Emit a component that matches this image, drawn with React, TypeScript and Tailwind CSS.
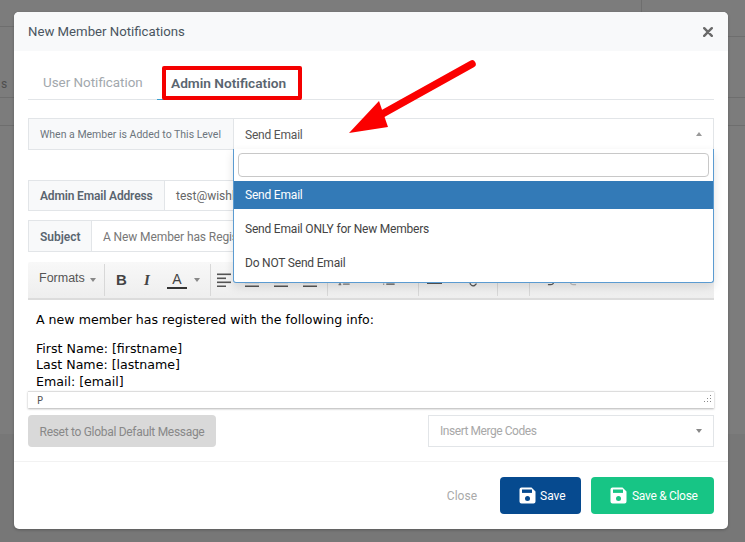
import React from "react";
import { List, ListOrdered, Link, Undo2, Redo2 } from "lucide-react";

const font = "font-['Roboto',sans-serif]";

function Floppy({ hole }: { hole: string }) {
  return (
    <svg width="17" height="17" viewBox="0 0 17 17" className="shrink-0">
      <path d="M2.5 0.5H12.5L16.5 4.5V14.5A2 2 0 0 1 14.5 16.5H2.5A2 2 0 0 1 0.5 14.5V2.5A2 2 0 0 1 2.5 0.5Z" fill="#fff" />
      <rect x="3" y="2.5" width="10" height="3.4" fill={hole} />
      <circle cx="8.5" cy="11.5" r="2.5" fill={hole} />
    </svg>
  );
}

function Caret({ up, cls }: { up?: boolean; cls?: string }) {
  return (
    <span
      className={
        (up
          ? "w-0 h-0 border-x-[3.5px] border-x-transparent border-b-[4px] border-b-[#999] "
          : "w-0 h-0 border-x-[3.5px] border-x-transparent border-t-[4px] border-t-[#888] ") + (cls ?? "")
      }
    />
  );
}

function Sep({ cls }: { cls: string }) {
  return <span className={"w-px h-[32px] bg-[#d8d8d8] shrink-0 " + cls} />;
}

function Lines({ w, cls }: { w: number[]; cls: string }) {
  return (
    <svg width="14" height="14" viewBox="0 0 14 14" className={"shrink-0 " + cls}>
      {w.map((x, i) => (
        <rect key={i} x={0} y={i * 4 + 0.5} width={x} height="1.6" fill="#555" />
      ))}
    </svg>
  );
}

export default function App() {
  return (
    <div className={`relative w-[745px] h-[542px] overflow-hidden bg-[#7c7c7c] ${font}`}>
      {/* dimmed page behind the modal */}
      <div className="flex flex-col h-full">
        <div className="flex h-[434px]">
          <div className="w-[372px] flex flex-col">
            <div className="h-[27px] border-b border-[#6e6e6e]" />
            <div className="h-[71px] border-b border-[#6e6e6e] flex items-end pb-[7px] pl-[1px] text-[12px] leading-none text-[#4e4e4e]">
              <span>s</span>
            </div>
            <div className="h-[28px] border-b border-[#6e6e6e]" />
          </div>
          <div className="flex-1 flex flex-col">
            <div className="h-[37px] border-b border-[#6e6e6e]">
              <div className="w-[270px] h-full border-r border-[#6e6e6e]" />
            </div>
            <div className="h-[61px] border-b border-[#6e6e6e]" />
            <div className="h-[28px] border-b border-[#6e6e6e]" />
          </div>
        </div>
        <div className="flex-1 bg-[#777777]" />
      </div>

      <div className="absolute left-[14px] top-[12px] w-[714px] h-[517px] bg-white rounded-[5px] flex flex-col shadow-[0_1px_3px_rgba(0,0,0,0.25)]">
        <div className="h-[39px] bg-[#f8f9fa] rounded-t-[5px] flex items-center justify-between px-[14px] text-[13.2px] text-[#4a5560]">
          <span>New Member Notifications</span>
          <svg width="10" height="10" viewBox="0 0 10 10" className="mr-[1px]">
            <path d="M1.2 1.2L8.8 8.8M8.8 1.2L1.2 8.8" stroke="#6a6a6a" strokeWidth="2.4" strokeLinecap="round" />
          </svg>
        </div>

        <div className="flex-1 px-[14px] flex flex-col">
          <div className="h-[49px] border-b border-[#e2e5e8] flex items-end">
            <div className="w-[129px] h-full flex items-center pl-[15px] pt-[17px] text-[13.4px] text-[#a2a8ad]">User Notification</div>
            <div className="h-[33px] mb-[-1px] w-[144px] border-b border-[#3aa0d0] flex items-center pl-[14px] text-[13.7px] font-semibold text-[#5a6570]">
              Admin Notification
            </div>
          </div>

          <div className="mt-[18px] h-[32px] flex border border-[#e2e5e8]">
            <div className="w-[205px] bg-[#f8f9fa] border-r border-[#e2e5e8] flex items-center pl-[11px] pt-[1px] text-[#6c757d] text-[10.5px]">
              When a Member is Added to This Level
            </div>
            <div className="flex-1 flex items-center justify-between px-[11px] text-[#555] text-[12px] tracking-[-0.2px]">
              <span className="pt-[1px]">Send Email</span>
              <Caret up />
            </div>
          </div>

          <div className="mt-[30px] h-[31px] flex border border-[#e2e5e8]">
            <div className="w-[136px] bg-[#f8f9fa] border-r border-[#e2e5e8] flex items-center pl-[11px] text-[12px] tracking-[-0.15px] font-semibold text-[#5a6570]">
              Admin Email Address
            </div>
            <div className="flex-1 flex items-center pl-[11px] text-[12px] text-[#666]">test@wishlistmember.com</div>
          </div>

          <div className="mt-[9px] h-[32px] flex border border-[#e2e5e8]">
            <div className="w-[63px] bg-[#f8f9fa] border-r border-[#e2e5e8] flex items-center pl-[11px] pt-[2px] text-[12px] font-semibold text-[#5a6570]">
              Subject
            </div>
            <div className="flex-1 flex items-center pl-[11px] pt-[2px] text-[12px] tracking-[-0.1px] text-[#777]">A New Member has Registered</div>
          </div>

          <div className="mt-[10px] h-[38px] bg-gradient-to-b from-[#f8f8f8] to-[#eeeeee] border-b-2 border-[#dcdcdc] rounded-t-[2px] flex items-center text-[#444] font-['Liberation_Sans',sans-serif]">
            <span className="ml-[11px] w-[46px] text-[12.5px] text-[#555] -mt-[4px]">Formats</span>
            <Caret cls="ml-[5px]" />
            <Sep cls="ml-[8px]" />
            <span className="ml-[11px] w-[10px] font-bold text-[15px]">B</span>
            <span className="ml-[18px] w-[9px] italic font-bold text-[15px] font-['Liberation_Serif',serif]">I</span>
            <span className="ml-[14px] w-[20px] text-[14px] border-b-2 border-[#333] leading-[15px] text-center">A</span>
            <Caret cls="ml-[7px]" />
            <Sep cls="ml-[10px]" />
            <Lines w={[14, 9, 14, 9]} cls="ml-[6px]" />
            <Lines w={[14, 14, 14, 14]} cls="ml-[14px]" />
            <Lines w={[14, 14, 14, 14]} cls="ml-[15px]" />
            <Lines w={[14, 14, 14, 14]} cls="ml-[15px]" />
            <Sep cls="ml-[10px]" />
            <ListOrdered size={14} color="#777" className="ml-[9px] shrink-0" />
            <List size={14} color="#555" className="ml-[31px] shrink-0" />
            <Sep cls="ml-[22px]" />
            <span className="ml-[8px] w-[15px] h-[2px] bg-[#555] mt-[6px] shrink-0" />
            <Link size={14} color="#555" className="ml-[27px] shrink-0" />
            <Sep cls="ml-[14px]" />
            <Sep cls="ml-[31px]" />
            <Undo2 size={14} color="#555" className="ml-[12px] shrink-0" />
            <Redo2 size={14} color="#bbb" className="ml-[12px] shrink-0" />
          </div>

          <div className="h-[91px] text-[12.6px] leading-[16.5px] text-black pl-[8px] pt-[12px] font-['DejaVu_Sans',sans-serif] overflow-hidden">
            <p className="mb-[12px]">A new member has registered with the following info:</p>
            <p>First Name: [firstname]</p>
            <p>Last Name: [lastname]</p>
            <p>Email: [email]</p>
          </div>
          <div className="h-[17px] border-t border-[#ddd] shadow-[0_1px_2px_rgba(0,0,0,0.3)] flex items-center justify-between pl-[9px] pr-[2px] text-[10px] text-[#555] font-['DejaVu_Sans',sans-serif]">
            <span>P</span>
            <svg width="10" height="10" viewBox="0 0 10 10">
              <g fill="#888">
                <rect x="8" y="0" width="1" height="1" /><rect x="8" y="3" width="1" height="1" /><rect x="8" y="6" width="1" height="1" />
                <rect x="5" y="3" width="1" height="1" /><rect x="5" y="6" width="1" height="1" /><rect x="2" y="6" width="1" height="1" />
              </g>
            </svg>
          </div>

          <div className="mt-[7px] flex justify-between items-center">
            <div className="w-[188px] h-[32px] bg-[#d9d9d9] rounded-[4px] flex items-center justify-center pt-[1px] text-[12px] tracking-[-0.3px] text-[#888]">
              Reset to Global Default Message
            </div>
            <div className="w-[286px] h-[32px] border border-[#e2e5e8] flex items-center justify-between px-[11px] text-[12px] tracking-[-0.45px] text-[#a8a8a8]">
              <span>Insert Merge Codes</span>
              <Caret />
            </div>
          </div>
        </div>

        <div className="h-[68px] border-t border-[#f2f2f2] flex items-center justify-end pr-[14px]">
          <span className="text-[12px] pt-[1px] text-[#aaa] mr-[23px]">Close</span>
          <div className="w-[81px] h-[37px] bg-[#064a8f] rounded-[4px] flex items-center pl-[19px] gap-[4px] text-white text-[12px] mr-[10px]">
            <Floppy hole="#064a8f" /> <span className="pt-[1px]">Save</span>
          </div>
          <div className="w-[123px] h-[37px] bg-[#17c585] rounded-[4px] flex items-center pl-[19px] gap-[5px] text-white text-[12px] tracking-[-0.3px]">
            <Floppy hole="#17c585" /> <span className="pt-[1px]">Save &amp; Close</span>
          </div>
        </div>
      </div>

      {/* open select dropdown */}
      <div className="absolute left-[233px] top-[149px] w-[481px] h-[134px] bg-white border border-[#5b9bd1] border-t-0 rounded-b-[3px] shadow-[0_4px_10px_rgba(0,0,0,0.12)] text-[12px] tracking-[-0.2px] text-[#444]">
        <div className="h-[32px] px-[4px] pt-[4px]">
          <div className="h-[24px] border border-[#c8c8c8] rounded-[4px]" />
        </div>
        <div className="h-[28px] bg-[#337ab7] text-white flex items-center pl-[11px]">Send Email</div>
        <div className="h-[40px] flex items-center pl-[11px]">Send Email ONLY for New Members</div>
        <div className="h-[28px] flex items-center pl-[11px]">Do NOT Send Email</div>
      </div>

      {/* annotation: highlight box */}
      <div className="absolute left-[162px] top-[66px] w-[140px] h-[34px] border-[4px] border-[#f40000] rounded-[2px]" />

      {/* annotation: arrow */}
      <svg className="absolute left-[340px] top-[55px]" width="145" height="85" viewBox="0 0 145 85">
        <line x1="132" y1="9" x2="35" y2="63" stroke="#fb0000" strokeWidth="7.5" strokeLinecap="round" />
        <polygon points="9,78 39,46 48,72" fill="#fb0000" />
      </svg>
    </div>
  );
}
